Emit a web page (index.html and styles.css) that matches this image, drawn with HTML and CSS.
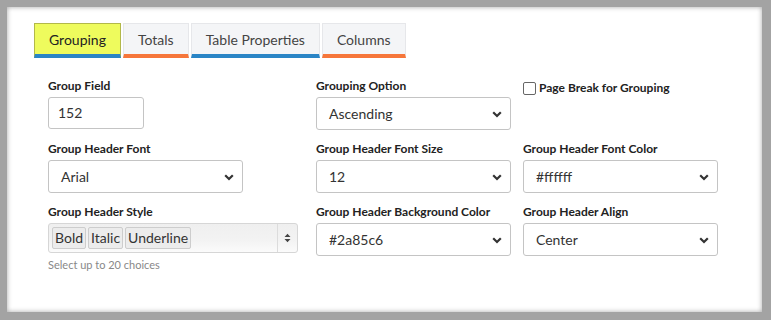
FILE: index.html
```html
<!DOCTYPE html>
<html lang="en">
<head>
    <meta charset="UTF-8">
    <title>Grouping</title>
    <link rel="stylesheet" href="styles.css">
</head>
<body>
    <div class="panel">
        <div class="tabs">
            <div class="tab tab-active">Grouping</div>
            <div class="tab tab-orange">Totals</div>
            <div class="tab">Table Properties</div>
            <div class="tab tab-orange">Columns</div>
        </div>

        <div class="form-grid">
            <div class="field">
                <label class="field-label">Group Field</label>
                <div class="input input-short">152</div>
            </div>
            <div class="field">
                <label class="field-label">Grouping Option</label>
                <div class="select">
                    <span>Ascending</span>
                    <svg class="chevron" width="10" height="7" viewBox="0 0 10 7"><path d="M1.2 1.2 L5 5 L8.8 1.2" fill="none" stroke="#333" stroke-width="2.2"/></svg>
                </div>
            </div>
            <div class="field">
                <label class="check-label"><span class="checkbox"></span>Page Break for Grouping</label>
            </div>

            <div class="field">
                <label class="field-label">Group Header Font</label>
                <div class="select">
                    <span>Arial</span>
                    <svg class="chevron" width="10" height="7" viewBox="0 0 10 7"><path d="M1.2 1.2 L5 5 L8.8 1.2" fill="none" stroke="#333" stroke-width="2.2"/></svg>
                </div>
            </div>
            <div class="field">
                <label class="field-label">Group Header Font Size</label>
                <div class="select">
                    <span>12</span>
                    <svg class="chevron" width="10" height="7" viewBox="0 0 10 7"><path d="M1.2 1.2 L5 5 L8.8 1.2" fill="none" stroke="#333" stroke-width="2.2"/></svg>
                </div>
            </div>
            <div class="field">
                <label class="field-label">Group Header Font Color</label>
                <div class="select">
                    <span>#ffffff</span>
                    <svg class="chevron" width="10" height="7" viewBox="0 0 10 7"><path d="M1.2 1.2 L5 5 L8.8 1.2" fill="none" stroke="#333" stroke-width="2.2"/></svg>
                </div>
            </div>

            <div class="field">
                <label class="field-label">Group Header Style</label>
                <div class="multi">
                    <div class="tags">
                        <span class="tag">Bold</span>
                        <span class="tag">Italic</span>
                        <span class="tag">Underline</span>
                    </div>
                    <div class="multi-arrow">
                        <svg width="7" height="10" viewBox="0 0 7 10"><path d="M0.5 4 L3.5 0.8 L6.5 4 Z M0.5 6 L3.5 9.2 L6.5 6 Z" fill="#444"/></svg>
                    </div>
                </div>
                <div class="help">Select up to 20 choices</div>
            </div>
            <div class="field">
                <label class="field-label">Group Header Background Color</label>
                <div class="select">
                    <span>#2a85c6</span>
                    <svg class="chevron" width="10" height="7" viewBox="0 0 10 7"><path d="M1.2 1.2 L5 5 L8.8 1.2" fill="none" stroke="#333" stroke-width="2.2"/></svg>
                </div>
            </div>
            <div class="field">
                <label class="field-label">Group Header Align</label>
                <div class="select">
                    <span>Center</span>
                    <svg class="chevron" width="10" height="7" viewBox="0 0 10 7"><path d="M1.2 1.2 L5 5 L8.8 1.2" fill="none" stroke="#333" stroke-width="2.2"/></svg>
                </div>
            </div>
        </div>
    </div>
</body>
</html>
```

FILE: styles.css
```css
* {
    margin: 0;
    padding: 0;
    box-sizing: border-box;
}

body {
    font-family: 'Lato', 'Open Sans', sans-serif;
    background: #a3a3a3;
    width: 771px;
    height: 320px;
    overflow: hidden;
    padding: 7px 9px 8px 7px;
}

.panel {
    background: white;
    height: 305px;
    box-shadow: inset 0 0 5px rgba(0,0,0,0.35);
    padding: 16px 0 0 27px;
}

/* Tabs */
.tabs {
    display: flex;
    gap: 2px;
}

.tab {
    height: 35px;
    padding: 0 14px;
    background: #f4f5f7;
    border: 1px solid #e6e7ea;
    border-bottom: 4px solid #2a85c6;
    color: #444;
    font-size: 14px;
    line-height: 31px;
}

.tab-orange {
    border-bottom-color: #f6763a;
}

.tab-active {
    background: #eefb5d;
    border-color: #b2b84a;
    border-bottom-color: #2a85c6;
    color: #222;
}

/* Form */
.form-grid {
    display: grid;
    grid-template-columns: 268px 207px 207px;
    row-gap: 11px;
    margin-top: 20px;
    padding-left: 14px;
}

.field-label {
    display: block;
    font-size: 12px;
    font-weight: bold;
    color: #222;
    line-height: 16px;
    margin-bottom: 3px;
}

.input {
    height: 32px;
    border: 1px solid #c4c4c4;
    border-radius: 3px;
    padding: 0 9px;
    font-size: 14px;
    line-height: 30px;
    color: #333;
}

.input-short {
    width: 96px;
}

.select {
    width: 195px;
    height: 33px;
    border: 1px solid #c4c4c4;
    border-radius: 3px;
    padding: 0 8px 0 12px;
    display: flex;
    align-items: center;
    justify-content: space-between;
    font-size: 14px;
    color: #333;
}

.chevron {
    margin-top: 1px;
}

.check-label {
    display: flex;
    align-items: center;
    gap: 3px;
    font-size: 12px;
    font-weight: bold;
    color: #222;
    margin-top: 2px;
    line-height: 16px;
}

.checkbox {
    width: 13px;
    height: 13px;
    border: 1px solid #666;
    border-radius: 2px;
    background: white;
}

/* Multi select */
.multi {
    width: 250px;
    height: 30px;
    border: 1px solid #d6d6d6;
    border-radius: 3px;
    background: linear-gradient(#efefef, #f3f3f3 60%, #fbfbfb);
    display: flex;
    align-items: stretch;
    margin-top: 1px;
}

.tags {
    flex: 1;
    display: flex;
    align-items: center;
    gap: 2px;
    padding-left: 3px;
}

.tag {
    height: 22px;
    padding: 0 2px;
    border: 1px solid #cdcdcd;
    border-radius: 2px;
    background: #ececec;
    font-size: 14px;
    line-height: 20px;
    color: #333;
}

.multi-arrow {
    width: 20px;
    border-left: 1px solid #dcdcdc;
    display: flex;
    align-items: center;
    justify-content: center;
}

.help {
    font-size: 11px;
    color: #888;
    margin-top: 5px;
}
```
